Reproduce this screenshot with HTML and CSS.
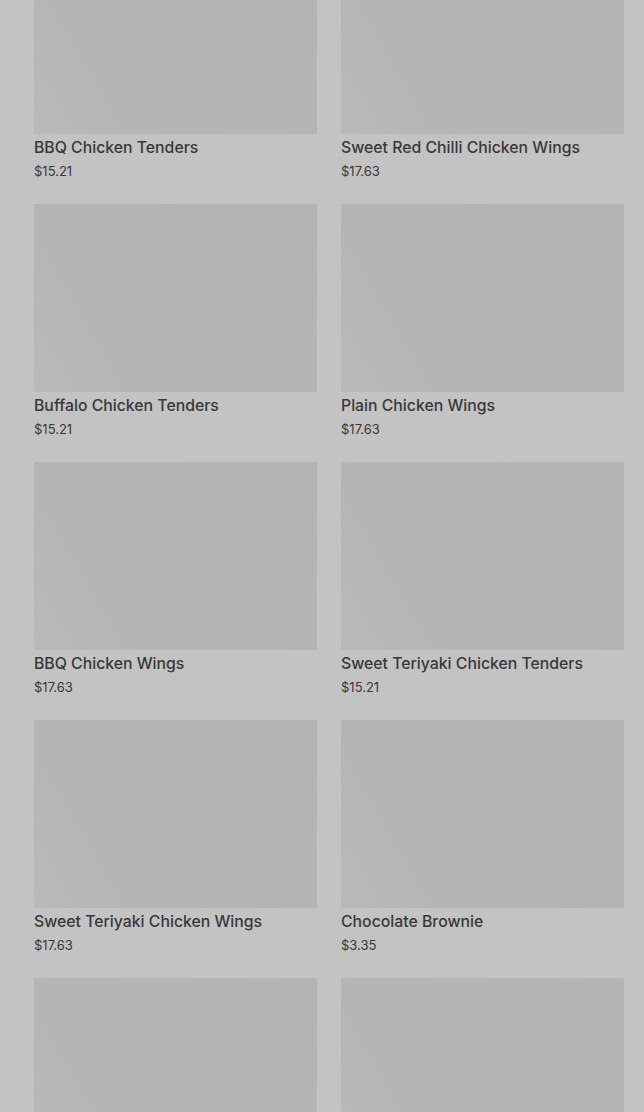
FILE: index.html
```html
<!DOCTYPE html>
<html>
<head>
<meta charset="utf-8">
<link rel="stylesheet" href="styles.css">
</head>
<body>
<main class="grid">
  <div class="card"><div class="thumb"></div><div class="name">BBQ Chicken Tenders</div><div class="price">$15.21</div></div>
  <div class="card"><div class="thumb"></div><div class="name">Sweet Red Chilli Chicken Wings</div><div class="price">$17.63</div></div>
  <div class="card"><div class="thumb"></div><div class="name">Buffalo Chicken Tenders</div><div class="price">$15.21</div></div>
  <div class="card"><div class="thumb"></div><div class="name">Plain Chicken Wings</div><div class="price">$17.63</div></div>
  <div class="card"><div class="thumb"></div><div class="name">BBQ Chicken Wings</div><div class="price">$17.63</div></div>
  <div class="card"><div class="thumb"></div><div class="name">Sweet Teriyaki Chicken Tenders</div><div class="price">$15.21</div></div>
  <div class="card"><div class="thumb"></div><div class="name">Sweet Teriyaki Chicken Wings</div><div class="price">$17.63</div></div>
  <div class="card"><div class="thumb"></div><div class="name">Chocolate Brownie</div><div class="price">$3.35</div></div>
  <div class="card"><div class="thumb"></div><div class="name">&nbsp;</div><div class="price">&nbsp;</div></div>
  <div class="card"><div class="thumb"></div><div class="name">&nbsp;</div><div class="price">&nbsp;</div></div>
</main>
</body>
</html>
```
FILE: styles.css
```css
html, body {
  margin: 0;
  padding: 0;
  background: #c3c3c3;
  overflow: hidden;
  height: 1112px;
}
body {
  font-family: Inter, "Liberation Sans", sans-serif;
  color: #383838;
}
.grid {
  display: grid;
  grid-template-columns: 283px 283px;
  column-gap: 24px;
  row-gap: 23px;
  padding: 0 20px 0 34px;
  margin-top: -54px;
}
.thumb {
  height: 188px;
  background: linear-gradient(60deg, #b9b9b9 0%, #b5b5b5 25%, #b4b4b4 100%);
}
.name {
  margin-top: 3px;
  font-size: 15.8px;
  font-weight: 500;
  line-height: 22px;
  white-space: nowrap;
}
.price {
  margin-top: 2px;
  font-size: 13px;
  line-height: 20px;
}
```
